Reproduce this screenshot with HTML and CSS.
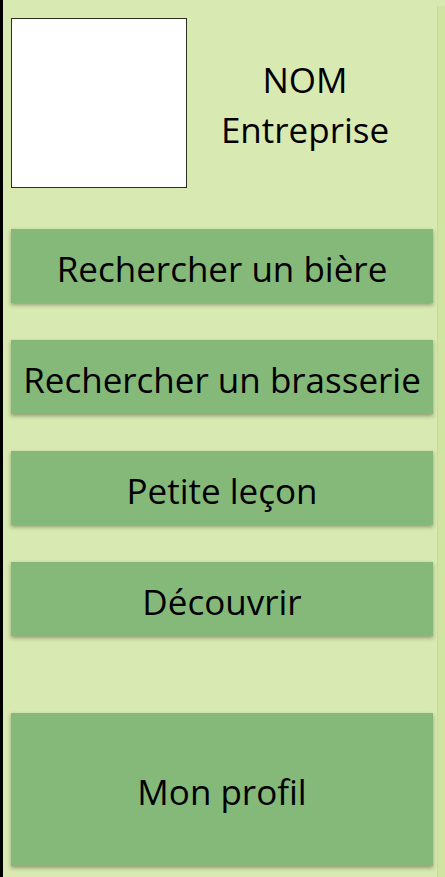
FILE: index.html
```html
<!DOCTYPE html>
<html lang="fr">
<head>
<meta charset="utf-8">
<meta name="viewport" content="width=device-width, initial-scale=1">
<title>Accueil</title>
<link rel="stylesheet" href="styles.css">
</head>
<body>
<div class="screen">
  <main class="content">
    <header class="header">
      <div class="logo"></div>
      <h1 class="company">NOM<br>Entreprise</h1>
    </header>
    <nav class="menu">
      <button class="tile" type="button">Rechercher un bière</button>
      <button class="tile" type="button">Rechercher un brasserie</button>
      <button class="tile" type="button">Petite leçon</button>
      <button class="tile" type="button">Découvrir</button>
      <button class="tile tile-profile" type="button">Mon profil</button>
    </nav>
  </main>
  <div class="edge"></div>
</div>
</body>
</html>
```

FILE: styles.css
```css
* {
  box-sizing: border-box;
}

body {
  margin: 0;
  background: #d9e9b2;
  color: #000;
  font-family: "Open Sans", "Noto Sans", sans-serif;
}

.screen {
  display: flex;
  min-height: 100vh;
  border-left: 3px solid #000;
}

.content {
  flex: 1;
  min-width: 0;
  padding: 18px 4px 10px 8px;
}

.edge {
  flex: 0 0 8px;
  margin-top: 6px;
  background: #d0e5a1;
  border-left: 1px solid #c5da9b;
}

.header {
  display: flex;
  align-items: center;
}

.logo {
  flex: 0 0 176px;
  height: 170px;
  background: #fff;
  border: 1px solid #2c3020;
}

.company {
  flex: 1;
  margin: 0;
  padding-top: 4px;
  padding-right: 10px;
  font-size: 35px;
  font-weight: 400;
  line-height: 50px;
  text-align: center;
}

.menu {
  display: flex;
  flex-direction: column;
  gap: 37px;
  margin-top: 41px;
}

.tile {
  height: 74px;
  padding: 4px 0 0;
  border: 0;
  border-radius: 0;
  background: #85b97a;
  box-shadow: 0 2px 4px rgba(60, 60, 40, 0.45);
  color: inherit;
  font: inherit;
  font-size: 35px;
  white-space: nowrap;
}

.tile-profile {
  height: 153px;
  margin-top: 40px;
}
```
